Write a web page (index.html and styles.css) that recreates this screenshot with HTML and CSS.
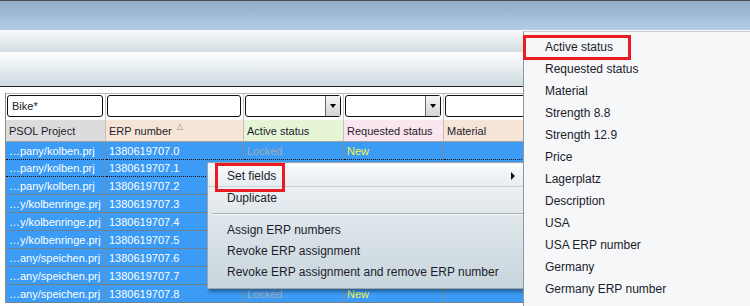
FILE: index.html
```html
<!DOCTYPE html>
<html lang="en">
<head>
    <meta charset="UTF-8">
    <title>ERP assignment</title>
    <link rel="stylesheet" href="styles.css">
</head>
<body>
    <div class="window">
        <div class="titlebar"></div>
        <div class="ribbon"></div>
        <div class="toolbar"></div>

        <div class="content">
            <div class="grid">
                <div class="filter-row">
                    <div class="cell"><div class="field">Bike*</div></div>
                    <div class="cell"><div class="field"></div></div>
                    <div class="cell"><div class="field combo"><span class="drop"></span></div></div>
                    <div class="cell"><div class="field combo"><span class="drop"></span></div></div>
                    <div class="cell"><div class="field"></div></div>
                </div>
                <div class="head-row">
                    <div class="cell h-grey">PSOL Project</div>
                    <div class="cell h-sand">ERP number<span class="sort"></span></div>
                    <div class="cell h-green">Active status</div>
                    <div class="cell h-pink">Requested status</div>
                    <div class="cell h-sand">Material</div>
                </div>
                <div class="row">
                    <div class="cell">…pany/kolben.prj</div><div class="cell">1380619707.0</div>
                    <div class="cell locked">Locked</div><div class="cell new">New</div><div class="cell"></div>
                </div>
                <div class="row focus">
                    <div class="cell">…pany/kolben.prj</div><div class="cell">1380619707.1</div>
                    <div class="cell locked">Locked</div><div class="cell new">New</div><div class="cell"></div>
                </div>
                <div class="row">
                    <div class="cell">…pany/kolben.prj</div><div class="cell">1380619707.2</div>
                    <div class="cell locked">Locked</div><div class="cell new">New</div><div class="cell"></div>
                </div>
                <div class="row">
                    <div class="cell">…y/kolbenringe.prj</div><div class="cell">1380619707.3</div>
                    <div class="cell locked">Locked</div><div class="cell new">New</div><div class="cell"></div>
                </div>
                <div class="row">
                    <div class="cell">…y/kolbenringe.prj</div><div class="cell">1380619707.4</div>
                    <div class="cell locked">Locked</div><div class="cell new">New</div><div class="cell"></div>
                </div>
                <div class="row">
                    <div class="cell">…y/kolbenringe.prj</div><div class="cell">1380619707.5</div>
                    <div class="cell locked">Locked</div><div class="cell new">New</div><div class="cell"></div>
                </div>
                <div class="row">
                    <div class="cell">…any/speichen.prj</div><div class="cell">1380619707.6</div>
                    <div class="cell locked">Locked</div><div class="cell new">New</div><div class="cell"></div>
                </div>
                <div class="row">
                    <div class="cell">…any/speichen.prj</div><div class="cell">1380619707.7</div>
                    <div class="cell locked">Locked</div><div class="cell new">New</div><div class="cell"></div>
                </div>
                <div class="row">
                    <div class="cell">…any/speichen.prj</div><div class="cell">1380619707.8</div>
                    <div class="cell locked">Locked</div><div class="cell new">New</div><div class="cell"></div>
                </div>
            </div>
        </div>

        <!-- context menu on the selected rows -->
        <div class="context-menu">
            <div class="menu-item active"><span class="marked">Set fields</span><span class="arrow"></span></div>
            <div class="menu-item">Duplicate</div>
            <div class="menu-sep"></div>
            <div class="menu-item low">Assign ERP numbers</div>
            <div class="menu-item low">Revoke ERP assignment</div>
            <div class="menu-item low">Revoke ERP assignment and remove ERP number</div>
        </div>

        <!-- submenu of "Set fields" -->
        <div class="submenu">
            <div class="sub-item"><span class="marked wide">Active status</span></div>
            <div class="sub-item">Requested status</div>
            <div class="sub-item">Material</div>
            <div class="sub-item">Strength 8.8</div>
            <div class="sub-item">Strength 12.9</div>
            <div class="sub-item">Price</div>
            <div class="sub-item">Lagerplatz</div>
            <div class="sub-item">Description</div>
            <div class="sub-item">USA</div>
            <div class="sub-item">USA ERP number</div>
            <div class="sub-item">Germany</div>
            <div class="sub-item">Germany ERP number</div>
        </div>
    </div>
</body>
</html>
```

FILE: styles.css
```css
body {
    margin: 0;
    font-family: "Liberation Sans", Arial, sans-serif;
    color: #1c1c2c;
}
.window {
    position: relative;
    width: 750px;
    height: 306px;
    overflow: hidden;
    background: #fff;
}
.titlebar {
    height: 29px;
    border-top: 1px solid #4a4a4a;
    background: linear-gradient(#91adca, #b4cce6);
}
.ribbon {
    height: 22px;
    background: linear-gradient(#f8fafb, #d2dde2);
}
.toolbar {
    height: 34px;
    background: linear-gradient(#f8fafb 10%, #cedae0);
    border-bottom: 1px solid #262626;
}
.content {
    padding: 6px 0 0 5px;
}
.grid {
    border-left: 1px solid #8c8c8c;
    border-top: 1px solid #b8b8b8;
    font-size: 11px;
}
.filter-row,
.head-row,
.row {
    display: grid;
    grid-template-columns: 100px 138px 100px 100px 1fr;
}
.cell {
    border-right: 1px solid #7e8b98;
    padding: 0 3px;
    white-space: nowrap;
    overflow: hidden;
}
.filter-row .cell {
    height: 24px;
    padding: 1px 2px 1px 1px;
    border-right-color: #c8c8c8;
}
.field {
    position: relative;
    height: 20px;
    line-height: 20px;
    padding: 0 4px;
    border: 1px solid #111;
    border-radius: 3px;
    background: #fff;
}
.drop {
    position: absolute;
    right: 0;
    top: 0;
    width: 14px;
    height: 20px;
    border-left: 1px solid #666;
    background: linear-gradient(#f4f4f4, #d4d4d4);
}
.drop::after {
    content: "";
    position: absolute;
    left: 4px;
    top: 8px;
    border: 3px solid transparent;
    border-top: 4px solid #000;
}
.head-row .cell {
    height: 21px;
    line-height: 23px;
    position: relative;
    border-bottom: 1px solid #a0a0a0;
    border-right-color: #c0c0c0;
}
.h-grey { background: #dcdcdc; }
.h-sand { background: #f6e5d7; }
.h-green { background: #e6f5d6; }
.h-pink { background: #fbe5ee; }
.sort {
    position: absolute;
    left: 71px;
    top: 2px;
    width: 7px;
    height: 5px;
}
.sort::after {
    content: "△";
    position: absolute;
    left: 0;
    top: -7px;
    font-size: 8px;
    color: #888;
}
.row .cell {
    height: 17px;
    line-height: 18px;
    background: #3b9bf5;
    color: #fff;
    border-bottom: 1px solid #6f8090;
}
.row .locked { color: #a3acb6; }
.row .new { color: #f4f44a; }
.row.focus .cell {
    border-top: 1px dotted #111;
    border-bottom: 1px dotted #111;
    height: 16px;
    line-height: 16px;
    margin-top: -1px;
}

.context-menu {
    position: absolute;
    left: 207px;
    top: 162px;
    width: 317px;
    height: 124px;
    padding-top: 1px;
    border: 1px solid #9da5ab;
    background: linear-gradient(#f4f6f8, #d7e1e6 60%, #c8d6dd);
    box-shadow: 2px 3px 3px rgba(0, 0, 0, .35);
    font-size: 12px;
}
.menu-item {
    position: relative;
    height: 22px;
    line-height: 22px;
    padding-left: 19px;
}
.menu-item.low {
    height: 21px;
    line-height: 21px;
}
.menu-item.active {
    background: linear-gradient(#fbfcfd, #e6ecf0);
    border-bottom: 1px solid #c6d1d7;
    line-height: 24px;
}
.arrow {
    position: absolute;
    right: 10px;
    top: 8px;
    border: 4px solid transparent;
    border-left: 4px solid #111;
    border-right: 0;
}
.menu-sep {
    height: 1px;
    margin: 4px 0 5px 4px;
    background: #a8b3b9;
    border-bottom: 1px solid #f4f6f7;
}
.marked {
    position: relative;
}
.marked::after {
    content: "";
    position: absolute;
    left: -12px;
    right: -9px;
    top: -6px;
    bottom: -9px;
    border: 3px solid #ec1c24;
}
.submenu {
    position: absolute;
    left: 523px;
    top: 31px;
    width: 240px;
    height: 290px;
    padding-top: 4px;
    border-left: 1px solid #8f979d;
    border-top: 1px solid #c8cdd1;
    background: #f5f7f9;
    font-size: 12px;
}
.sub-item {
    height: 22px;
    line-height: 22px;
    padding-left: 21px;
}
.marked.wide::after {
    left: -22px;
    right: -18px;
    top: -5px;
    bottom: -6px;
}
```
